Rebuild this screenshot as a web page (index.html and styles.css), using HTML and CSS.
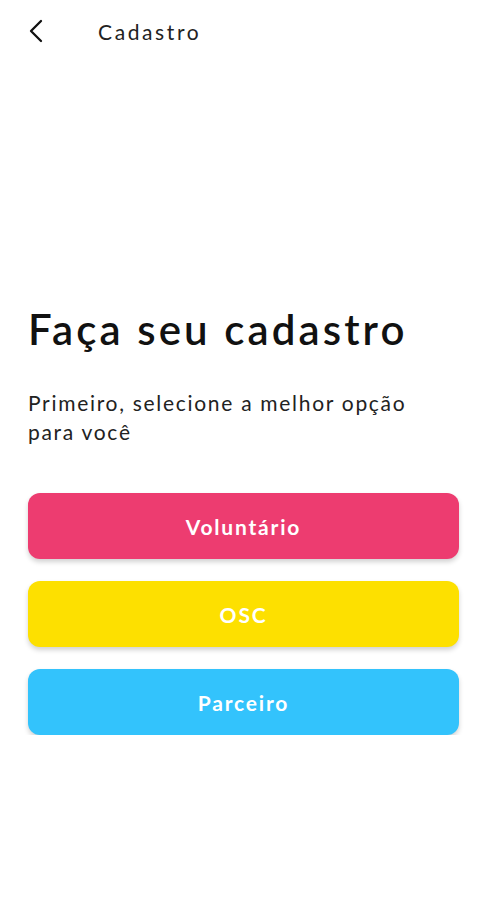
FILE: index.html
```html
<!DOCTYPE html>
<html lang="pt-BR">
<head>
  <meta charset="UTF-8" />
  <meta name="viewport" content="width=device-width, initial-scale=1.0" />
  <title>Cadastro</title>
  <link rel="stylesheet" href="styles.css">
</head>
<body>
  <header class="topbar">
    <button class="back" aria-label="Voltar">
      <svg width="16" height="24" viewBox="0 0 16 24">
        <path d="M13 2 L3 12 L13 22" fill="none" stroke="#111" stroke-width="2.3" stroke-linecap="round" stroke-linejoin="round"/>
      </svg>
    </button>
    <span class="topbar-title">Cadastro</span>
  </header>

  <main class="content">
    <h1 class="title">Faça seu cadastro</h1>
    <p class="subtitle">Primeiro, selecione a melhor opção para você</p>

    <div class="options">
      <button class="option pink">Voluntário</button>
      <button class="option yellow">OSC</button>
      <button class="option blue">Parceiro</button>
    </div>
  </main>
</body>
</html>
```

FILE: styles.css
```css
html, body {
  margin: 0;
  padding: 0;
  background: #fff;
  font-family: Lato, 'Noto Sans', sans-serif;
  color: #111;
}

.topbar {
  display: flex;
  align-items: center;
  height: 62px;
  padding: 0 28px;
}
.back {
  display: flex;
  align-items: center;
  background: none;
  border: none;
  padding: 0;
  margin-right: 54px;
  cursor: pointer;
}
.topbar-title {
  font-size: 21px;
  letter-spacing: 2.6px;
  color: #222;
}

.content {
  padding: 242px 28px 0 28px;
}
.title {
  margin: 0;
  font-size: 42px;
  font-weight: 600;
  letter-spacing: 3.1px;
  line-height: 50px;
}
.subtitle {
  margin: 34px 0 0;
  width: 410px;
  font-size: 21px;
  line-height: 29px;
  letter-spacing: 1.7px;
  color: #222;
}

.options {
  display: flex;
  flex-direction: column;
  gap: 22px;
  margin-top: 47px;
}
.option {
  height: 66px;
  border: none;
  border-radius: 12px;
  color: #fff;
  font-family: inherit;
  font-size: 21px;
  font-weight: 700;
  letter-spacing: 1.8px;
  box-shadow: 0 3px 5px rgba(0, 0, 0, 0.18);
  cursor: pointer;
}
.pink { background: #ed3c70; }
.yellow { background: #fde000; }
.blue { background: #33c3fc; }
```
